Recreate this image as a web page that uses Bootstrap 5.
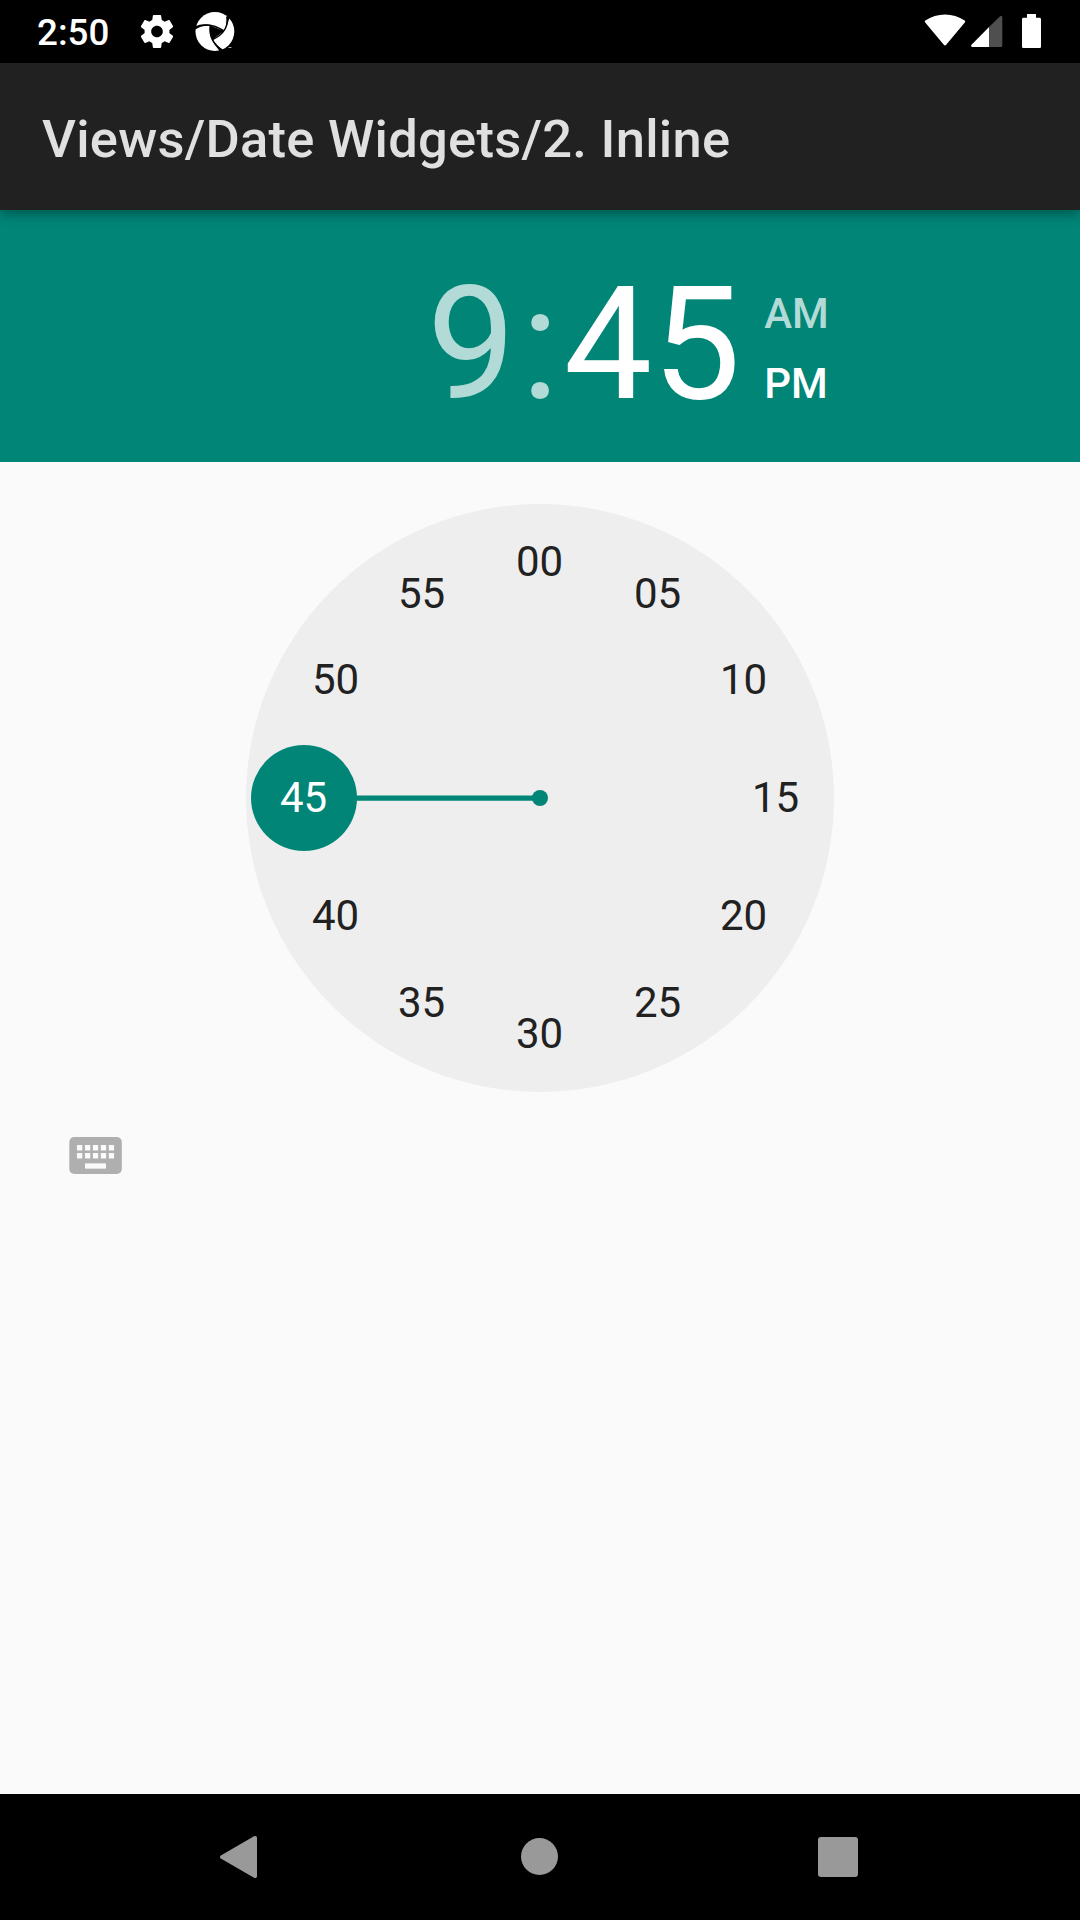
<!DOCTYPE html>
<html lang="en">
<head>
<meta charset="utf-8">
<meta name="viewport" content="width=device-width, initial-scale=1">
<title>Views/Date Widgets/2. Inline</title>
<link rel="stylesheet" href="https://cdn.jsdelivr.net/npm/bootstrap@5.3.0/dist/css/bootstrap.min.css">
<style>
body{font-family:Roboto,"Noto Sans",sans-serif;background:#fafafa;height:1920px;overflow:hidden}
svg{display:block;flex:none}
.status-bar{height:63px;padding:0 38px 0 37px}
.status-time{font-size:36.75px;font-weight:500;line-height:1;padding-top:3px;width:104px}
.status-logo{margin-left:22px}
.app-bar{height:147px;background:#212121;padding:5px 42px 0;box-shadow:0 4px 11px rgba(0,0,0,.34);z-index:1}
.app-title{font-size:52.5px;font-weight:500;line-height:1;color:#e0e0e0;letter-spacing:.27px}
.time-header{height:252px;background:#008577;color:#fff;padding:56px 0 0 427px}
.time-digits{font-size:157.5px;line-height:1}
.dimmed{color:#b2dad6}
.digit-sep{padding:0 4.5px 0 5.5px}
.ampm{font-size:42px;font-weight:500;line-height:70px;padding:13px 0 0 23.5px}
.clock-wrap{padding-top:42px}
.face-text{font-size:42px;text-anchor:middle;fill:#212121}
.kbd-row{padding:45px 0 0 69px}
.nav-bar{height:126px}
</style>
<script src="https://cdn.jsdelivr.net/npm/bootstrap@5.3.0/dist/js/bootstrap.bundle.min.js"></script>
</head>
<body class="d-flex flex-column">
<header class="status-bar d-flex align-items-center bg-black text-white">
  <div class="status-time">2:50</div>
  <svg width="32" height="33" viewBox="2.35 2 19.3 20" fill="#fff" preserveAspectRatio="none"><path d="M19.43 12.98c.04-.32.07-.64.07-.98s-.03-.66-.07-.98l2.11-1.65c.19-.15.24-.42.12-.64l-2-3.46c-.12-.22-.39-.3-.61-.22l-2.49 1c-.52-.4-1.08-.73-1.69-.98l-.38-2.65C14.46 2.18 14.25 2 14 2h-4c-.25 0-.46.18-.49.42l-.38 2.65c-.61.25-1.17.59-1.69.98l-2.49-1c-.23-.09-.49 0-.61.22l-2 3.46c-.13.22-.07.49.12.64l2.11 1.65c-.04.32-.07.65-.07.98s.03.66.07.98l-2.11 1.65c-.19.15-.24.42-.12.64l2 3.46c.12.22.39.3.61.22l2.49-1c.52.4 1.08.73 1.69.98l.38 2.65c.03.24.24.42.49.42h4c.25 0 .46-.18.49-.42l.38-2.65c.61-.25 1.17-.59 1.69-.98l2.49 1c.23.09.49 0 .61-.22l2-3.46c.12-.22.07-.49-.12-.64l-2.11-1.65zM12 15.5c-1.93 0-3.5-1.57-3.5-3.5s1.57-3.5 3.5-3.5 3.5 1.57 3.5 3.5-1.57 3.5-3.5 3.5z"/></svg>
  <svg class="status-logo" width="40" height="39" viewBox="0 0 40 39">
    <circle cx="19.9" cy="19.5" r="19.4" fill="#fff"/>
    <path d="M15.200 13.500 29 19 17.200 27.700Q13.600 20.500 15.200 13.500z" fill="#000"/>
    <g fill="none" stroke="#000" stroke-width="1.5">
      <path d="M0 16.500Q13 8.500 29 19"/><path d="M31.800 4.500Q34.500 20 17.200 27.700"/><path d="M15.200 13.500Q13.500 29 27 38"/>
    </g>
    <path d="M0 14.500Q6 11 15.500 12.800L15 14Q6 12.500 0 17.500zM32 4l2.500 1.800Q33 13 29 19 32.500 13 32 4zM17 27.500Q21 34.500 28 37.500L24.500 39Q19.500 33 17 27.500z" fill="#000"/>
    <path d="M33.500 35.500h3" stroke="#aaa"/>
  </svg>
  <svg class="ms-auto" width="118" height="35" viewBox="0 0 118 35" fill="#fff">
    <path d="M1 8.200C.6 7.600.7 7 1.300 6.500 13-1.500 29-1.500 40.700 6.500c.6.500.7 1.100.3 1.700L22.200 30.700c-.7.900-1.700.9-2.400 0z"/>
    <path d="M65.300 12.800V33H48.500c-1.400 0-1.900-1.300-1-2.200z"/><path d="M65.300 12.800 75.800 2.500c.9-.9 2.500-.4 2.500.9V31.500c0 .9-.6 1.500-1.500 1.500H65.300z" fill="#4f4f4f"/>
    <path d="M103 0h9v3.700h3.400c1 0 1.600.6 1.600 1.600v27.200c0 1-.6 1.600-1.600 1.600H99.600c-1 0-1.600-.6-1.600-1.600V5.300c0-1 .6-1.600 1.600-1.600h3.400z"/>
  </svg>
</header>
<div class="app-bar d-flex align-items-center position-relative"><h1 class="app-title m-0">Views/Date Widgets/2. Inline</h1></div>
<main class="flex-grow-1">
  <div class="time-header d-flex">
    <div class="time-digits d-flex"><span class="dimmed">9</span><span class="digit-sep dimmed">:</span><span>45</span></div>
    <div class="ampm"><div class="dimmed">AM</div><div>PM</div></div>
  </div>
  <div class="clock-wrap d-flex justify-content-center">
    <svg width="588" height="588" viewBox="-294 -294 588 588">
      <circle r="294" fill="#eee"/>
      <path d="M0 0H-200" stroke="#008577" stroke-width="5.25"/>
      <circle r="8" fill="#008577"/><circle cx="-236" r="53" fill="#008577"/>
      <g class="face-text" transform="translate(-.5 0)">
        <text x="0" y="-222">00</text><text x="118" y="-190">05</text><text x="204" y="-104">10</text>
        <text x="236" y="14">15</text><text x="204" y="132">20</text><text x="118" y="219">25</text>
        <text x="0" y="250">30</text><text x="-118" y="219">35</text><text x="-204" y="132">40</text>
        <text x="-236" y="14" fill="#fff">45</text><text x="-204" y="-104">50</text><text x="-118" y="-190">55</text>
      </g>
    </svg>
  </div>
  <div class="kbd-row d-flex">
    <svg width="53" height="37" viewBox="0 0 53 37">
      <rect x=".3" width="52.5" height="37" rx="5" fill="#afafaf"/>
      <path d="M8 10.800h37.200M8 18.700h37.200" stroke="#fafafa" stroke-width="5.5" stroke-dasharray="5.3 2.65"/>
      <path d="M16 29h21" stroke="#fafafa" stroke-width="5.3"/>
    </svg>
  </div>
</main>
<nav class="nav-bar d-flex justify-content-center align-items-center bg-black">
  <svg width="640" height="44" viewBox="0 0 640 44" fill="#999">
    <path d="M.8 20.400 34 1.200c1.500-.8 3 0 3 1.500v38.600c0 1.500-1.500 2.300-3 1.500L.8 23.600c-1.100-.8-1.100-2.400 0-3.200z"/>
    <circle cx="319.5" cy="21.5" r="18.5"/>
    <rect x="598" y="2" width="40" height="40" rx="3"/>
  </svg>
</nav>
</body>
</html>
